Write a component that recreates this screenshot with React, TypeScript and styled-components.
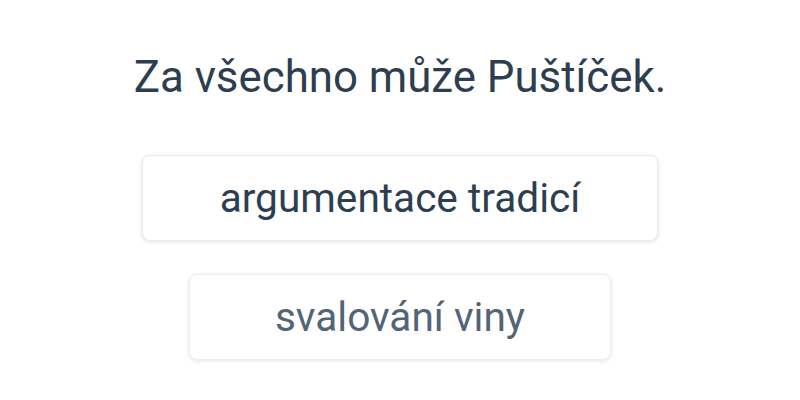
import React from "react";
import styled, { createGlobalStyle } from "styled-components";

const Global = createGlobalStyle`
  html, body { margin: 0; padding: 0; background: #ffffff; }
  body { font-family: Roboto, "Noto Sans", sans-serif; }
`;

const Page = styled.div`
  display: flex;
  flex-direction: column;
  align-items: center;
  padding-top: 51px;
  width: 800px;
  height: 400px;
  box-sizing: border-box;
`;

const Question = styled.h1`
  margin: 0 0 52px 0;
  font-size: 43.8px;
  font-weight: 400;
  line-height: 52px;
  color: #2c3e50;
`;

const Options = styled.div`
  display: flex;
  flex-direction: column;
  align-items: center;
  gap: 33px;
`;

const Option = styled.button<{ $pad: number; $fade?: boolean }>`
  display: flex;
  align-items: center;
  justify-content: center;
  height: 86px;
  padding: 0 ${(p) => p.$pad}px;
  border: 1px solid #ececec;
  border-radius: 8px;
  background: #ffffff;
  box-shadow: 0 1px 4px rgba(0, 0, 0, 0.12);
  font-family: Roboto, "Noto Sans", sans-serif;
  font-size: 40.6px;
  font-weight: 400;
  color: ${(p) => (p.$fade ? "#34495e" : "#2c3e50")};
  opacity: ${(p) => (p.$fade ? 0.85 : 1)};
  cursor: pointer;
`;

export default function App() {
  return (
    <>
      <Global />
      <Page>
        <Question>Za všechno může Puštíček.</Question>
        <Options>
          <Option $pad={77}>argumentace tradicí</Option>
          <Option $pad={85} $fade>
            svalování viny
          </Option>
        </Options>
      </Page>
    </>
  );
}
